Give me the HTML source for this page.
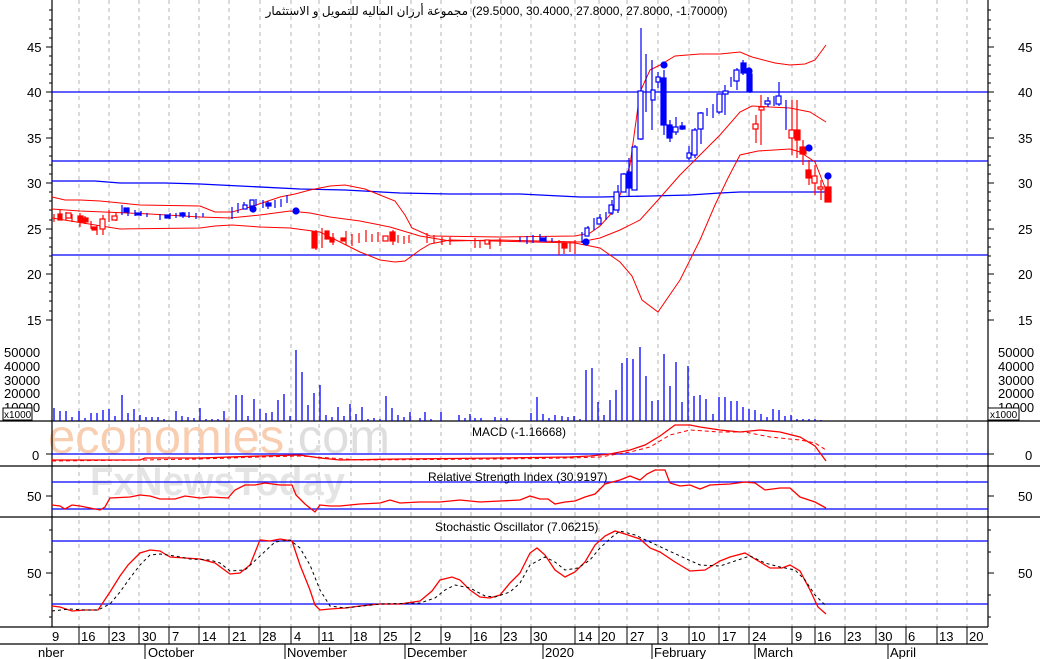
<!DOCTYPE html>
<html><head><meta charset="utf-8"><style>
html,body{margin:0;padding:0;background:#fff;}
svg{display:block;font-family:"Liberation Sans",sans-serif;}
</style></head><body>
<svg width="1040" height="659" viewBox="0 0 1040 659" xmlns="http://www.w3.org/2000/svg">
<rect width="1040" height="659" fill="#fff"/>
<!-- vertical grid -->
<g stroke="#b4b4b4" stroke-dasharray="4,4" stroke-width="1">
<path d="M79 0V627M109 0V627M139 0V627M169 0V627M199 0V627M229 0V627M260 0V627M291 0V627M319 0V627M351 0V627M380 0V627M411 0V627M441 0V627M471 0V627M501 0V627M531 0V627M575 0V627M599 0V627M627 0V627M658 0V627M689 0V627M719 0V627M749 0V627M792 0V627M815 0V627M845 0V627M876 0V627M906 0V627M937 0V627M967 0V627"/>
</g>
<!-- watermark -->
<text x="48" y="453" font-size="48" fill="#f8cdb0" textLength="342" lengthAdjust="spacingAndGlyphs">economies<tspan fill="#dedede">.com</tspan></text>
<text x="90" y="495" font-size="40" fill="#e4e4e4" font-weight="bold" textLength="255" lengthAdjust="spacingAndGlyphs">FxNewsToday</text>
<!-- axes -->
<g stroke="#000" stroke-width="1.2" fill="none">
<path d="M52 0V627M988 0V627"/>
<path d="M52 421H1040M0 421H52M0 466H1040M0 517H1040M0 627H988"/>
<path d="M0 644H988"/>
</g>
<!-- ticks -->
<g stroke="#000" stroke-width="1">
<path d="M46 47h6M46 92h6M46 138h6M46 183h6M46 229h6M46 274h6M46 320h6M988 47h6M988 92h6M988 138h6M988 183h6M988 229h6M988 274h6M988 320h6"/>
<path d="M49 10h3M49 20h3M49 29h3M49 38h3M49 56h3M49 65h3M49 74h3M49 83h3M49 101h3M49 110h3M49 120h3M49 129h3M49 147h3M49 156h3M49 165h3M49 174h3M49 192h3M49 201h3M49 210h3M49 220h3M49 238h3M49 247h3M49 256h3M49 265h3M49 283h3M49 292h3M49 301h3M49 311h3"/>
<path d="M988 10h3M988 20h3M988 29h3M988 38h3M988 56h3M988 65h3M988 74h3M988 83h3M988 101h3M988 110h3M988 120h3M988 129h3M988 147h3M988 156h3M988 165h3M988 174h3M988 192h3M988 201h3M988 210h3M988 220h3M988 238h3M988 247h3M988 256h3M988 265h3M988 283h3M988 292h3M988 301h3M988 311h3"/>
<path d="M46 454h6M988 454h6M46 496h6M988 496h6M46 573h6M988 573h6M49 530h3M49 552h3M49 595h3M49 617h3M988 530h3M988 552h3M988 595h3M988 617h3"/>
<path d="M79 627v17M109 627v17M139 627v17M169 627v17M199 627v17M229 627v17M260 627v17M291 627v17M319 627v17M351 627v17M380 627v17M411 627v17M441 627v17M471 627v17M501 627v17M531 627v17M575 627v17M599 627v17M627 627v17M658 627v17M689 627v17M719 627v17M749 627v17M792 627v17M815 627v17M845 627v17M876 627v17M906 627v17M937 627v17M967 627v17"/>
<path d="M145 644v15M285 644v15M405 644v15M543 644v15M652 644v15M755 644v15M888 644v15"/>
</g>
<!-- axis labels -->
<g font-size="13" fill="#000">
<text x="27" y="52">45</text><text x="27" y="97">40</text><text x="27" y="143">35</text><text x="27" y="188">30</text><text x="27" y="234">25</text><text x="27" y="279">20</text><text x="27" y="325">15</text>
<text x="1018" y="52">45</text><text x="1018" y="97">40</text><text x="1018" y="143">35</text><text x="1018" y="188">30</text><text x="1018" y="234">25</text><text x="1018" y="279">20</text><text x="1018" y="325">15</text>
<text x="4" y="357">50000</text><text x="4" y="371">40000</text><text x="4" y="385">30000</text><text x="4" y="398">20000</text><text x="4" y="412">10000</text>
<text x="998" y="357">50000</text><text x="998" y="371">40000</text><text x="998" y="385">30000</text><text x="998" y="398">20000</text><text x="998" y="412">10000</text>
<text x="32" y="460">0</text><text x="1025" y="460">0</text>
<text x="27" y="501">50</text><text x="1018" y="501">50</text>
<text x="27" y="578">50</text><text x="1018" y="578">50</text>
</g>
<g font-size="10"><rect x="3" y="408" width="29" height="12" fill="#fff" stroke="#000"/><text x="4" y="418">x1000</text>
<rect x="988" y="408" width="31" height="12" fill="#fff" stroke="#000"/><text x="990" y="418">x1000</text></g>
<g font-size="13" fill="#000">
<text x="52" y="641">9</text><text x="81" y="641">16</text><text x="111" y="641">23</text><text x="142" y="641">30</text><text x="172" y="641">7</text><text x="202" y="641">14</text><text x="232" y="641">21</text><text x="262" y="641">28</text><text x="294" y="641">4</text><text x="321" y="641">11</text><text x="353" y="641">18</text><text x="383" y="641">25</text><text x="414" y="641">2</text><text x="444" y="641">9</text><text x="473" y="641">16</text><text x="503" y="641">23</text><text x="533" y="641">30</text><text x="578" y="641">14</text><text x="601" y="641">20</text><text x="630" y="641">27</text><text x="661" y="641">3</text><text x="691" y="641">10</text><text x="722" y="641">17</text><text x="752" y="641">24</text><text x="795" y="641">9</text><text x="817" y="641">16</text><text x="847" y="641">23</text><text x="878" y="641">30</text><text x="908" y="641">6</text><text x="939" y="641">13</text><text x="969" y="641">20</text>
<text x="38" y="657">nber</text><text x="148" y="657">October</text><text x="287" y="657">November</text><text x="407" y="657">December</text><text x="545" y="657">2020</text><text x="654" y="657">February</text><text x="757" y="657">March</text><text x="890" y="657">April</text>
</g>
<text x="468" y="15" font-size="12" text-anchor="end" font-family="'Liberation Sans','DejaVu Sans',sans-serif">مجموعة أرزان الماليه للتمويل و الاستثمار</text>
<text x="472" y="15" font-size="12">(29.5000, 30.4000, 27.8000, 27.8000, -1.70000)</text>
<text x="472" y="436" font-size="12">MACD (-1.16668)</text>
<text x="428" y="481" font-size="12">Relative Strength Index (30.9197)</text>
<text x="435" y="531" font-size="12">Stochastic Oscillator (7.06215)</text>
<!-- horizontal lines -->
<g stroke="#0000ff" stroke-width="1.3" fill="none">
<path d="M52 92H988M52 161H988M52 255H988"/>
<path d="M52 454H988M52 482H988M52 509H988M52 541H988M52 604H988"/>
<polyline points="52,181 95,181 120,183 165,183 200,184 300,189 345,190 400,193 450,194 520,194 560,196 580,197 600,197 650,196 690,195 720,193 740,192 826,192"/>
</g>
<!-- bollinger -->
<g stroke="#ff0000" stroke-width="1" fill="none">
<polyline points="52,197 65,200 80,200 100,201 140,205 200,206 215,212 232,212 250,207 280,197 295,194 310,190 330,186 345,185 365,189 380,195 395,201 405,215 412,228 430,236 500,237 575,236 590,233 600,226 610,215 620,195 630,165 640,92 650,70 660,65 675,56 700,54 720,54 740,52 752,57 775,63 790,65 805,64 815,60 826,45"/>
<polyline points="52,209 80,211 150,214 200,217 230,218 260,215 290,211 310,213 330,217 360,221 390,227 420,236 450,241 500,240 580,242 600,238 620,230 640,220 658,200 680,175 700,155 720,135 740,112 752,106 770,107 790,108 810,112 826,122"/>
<polyline points="52,218 120,229 200,228 215,226 232,225 260,227 290,228 320,232 340,242 360,252 380,260 395,262 405,261 420,250 430,244 450,240 575,243 600,248 620,262 632,276 642,300 658,312 680,280 700,240 715,205 728,178 740,155 758,151 790,149 800,152 815,162 826,190"/>
</g>
<!-- candles -->
<g stroke-width="1.2">
<g fill="#ff0000" stroke="#ff0000">
<path d="M54 214v8M60 210v10M66 212v8M72 214v8M80 213v14M85 216v8M91 221v8M97 225v10M103 215v20M109 210v12M116 213v8M316 230v20M322 228v20M333 233v12M346 231v14M352 234v12M359 233v10M366 230v12M372 234v8M378 232v10M393 230v15M398 235v8M404 236v8M409 235v8M427 233v10M434 235v8M442 237v8M450 237v8M480 240v8M475 238v10M490 241v8M500 238v8M559 240v15M564 242v12M570 242v10M575 240v14M761 95v50M756 115v28M792 100v55M797 100v58M803 140v25M809 160v25M815 165v30M821 180v20M828 175v26"/>
<rect x="58" y="214" width="4" height="6"/><rect x="78" y="216" width="5" height="6"/><rect x="84" y="218" width="4" height="4"/><rect x="92" y="227" width="4" height="3"/><rect x="312" y="232" width="5" height="16"/><rect x="325" y="231" width="4" height="8"/><rect x="330" y="238" width="4" height="4"/><rect x="341" y="238" width="4" height="3"/><rect x="390" y="232" width="5" height="9"/><rect x="562" y="243" width="5" height="5"/><rect x="795" y="130" width="5" height="10"/><rect x="800" y="147" width="6" height="7"/><rect x="806" y="170" width="5" height="8"/><rect x="825" y="187" width="6" height="15"/>
<g fill="#fff"><rect x="66" y="213" width="5" height="5"/><rect x="100" y="219" width="5" height="10"/><rect x="112" y="216" width="5" height="4"/><rect x="383" y="236" width="5" height="5"/><rect x="753" y="124" width="5" height="5"/><rect x="759" y="107" width="5" height="3"/><rect x="789" y="130" width="5" height="8"/><rect x="812" y="176" width="5" height="7"/><rect x="818" y="187" width="5" height="2"/><rect x="485" y="240" width="4" height="4"/></g>
</g>
<g fill="#0000ff" stroke="#0000ff">
<path d="M122 205v10M128 208v8M135 210v6M141 211v5M147 213v4M160 214v6M170 213v6M176 213v5M183 212v6M189 212v6M196 213v6M203 213v4M232 207v12M238 203v10M244 202v7M250 200v9M256 199v7M263 200v8M268 201v8M275 200v8M281 199v8M287 195v8M520 237v5M527 236v8M533 235v8M540 234v6M546 236v6M552 238v4M582 232v11M588 226v10M594 218v12M600 214v10M606 212v8M612 200v15M618 185v28M624 173v18M629 158v38M635 145v45M641 28v112M646 54v58M652 60v70M658 72v16M664 70v65M670 120v22M676 117v18M682 122v8M689 146v14M695 128v30M701 112v32M707 108v8M713 104v14M719 94v20M725 85v30M731 77v10M737 68v22M743 60v15M750 68v25M768 97v10M774 96v10M779 82v24M786 100v30"/>
<rect x="124" y="208" width="5" height="4"/><rect x="136" y="213" width="5" height="2"/><rect x="165" y="215" width="5" height="3"/><rect x="180" y="213" width="5" height="3"/><rect x="266" y="203" width="5" height="3"/><rect x="540" y="238" width="5" height="3"/><rect x="627" y="172" width="4" height="16"/><rect x="661" y="78" width="5" height="47"/><rect x="667" y="125" width="5" height="13"/><rect x="680" y="126" width="5" height="3"/><rect x="741" y="63" width="5" height="10"/><rect x="747" y="74" width="5" height="17"/>
<g fill="#fff"><rect x="243" y="205" width="4" height="4"/><rect x="250" y="200" width="4" height="6"/><rect x="585" y="228" width="4" height="8"/><rect x="597" y="218" width="4" height="6"/><rect x="609" y="205" width="4" height="8"/><rect x="614" y="192" width="5" height="18"/><rect x="621" y="174" width="5" height="18"/><rect x="632" y="147" width="5" height="43"/><rect x="638" y="91" width="5" height="48"/><rect x="651" y="90" width="4" height="10"/><rect x="656" y="77" width="4" height="5"/><rect x="673" y="127" width="5" height="5"/><rect x="687" y="153" width="4" height="5"/><rect x="692" y="130" width="5" height="25"/><rect x="698" y="113" width="5" height="16"/><rect x="717" y="94" width="5" height="18"/><rect x="723" y="91" width="5" height="3"/><rect x="734" y="70" width="5" height="11"/><rect x="765" y="101" width="5" height="3"/><rect x="776" y="96" width="5" height="8"/></g>
<circle cx="253" cy="209" r="3"/><circle cx="296" cy="211" r="3"/><circle cx="586" cy="242" r="3"/><circle cx="664" cy="65" r="3"/><circle cx="749" cy="71" r="3"/><circle cx="809" cy="148" r="3"/><circle cx="828" cy="176" r="3"/>
</g>
</g>
<!-- volume -->
<g stroke="#0000ff" stroke-width="1.3">
<path d="M54 421v-13M60 421v-10M66 421v-10M72 421v-4M79 421v-10M85 421v-3M91 421v-8M97 421v-8M103 421v-11M109 421v-12M115 421v-5M122 421v-26M128 421v-8M134 421v-12M140 421v-6M146 421v-4M152 421v-4M158 421v-4M164 421v-2M176 421v-10M182 421v-5M188 421v-4M194 421v-3M200 421v-13M206 421v-2M212 421v-2M218 421v-2M224 421v-10M236 421v-26M242 421v-26M248 421v-5M254 421v-22M260 421v-12M266 421v-8M272 421v-9M278 421v-21M284 421v-27M290 421v-5M296 421v-71M302 421v-49M308 421v-16M314 421v-28M320 421v-36M326 421v-6M332 421v-4M338 421v-14M344 421v-5M350 421v-17M356 421v-7M362 421v-14M368 421v-2M374 421v-3M380 421v-2M386 421v-25M392 421v-13M398 421v-6M404 421v-4M410 421v-9M420 421v-3M425 421v-9M431 421v-2M441 421v-9M459 421v-6M465 421v-3M470 421v-7M475 421v-3M481 421v-3M495 421v-4M501 421v-3M507 421v-3M531 421v-8M537 421v-24M543 421v-7M549 421v-3M555 421v-6M562 421v-5M568 421v-4M574 421v-5M580 421v-2M586 421v-51M592 421v-53M598 421v-19M604 421v-6M610 421v-21M616 421v-31M622 421v-58M627 421v-63M633 421v-62M640 421v-74M646 421v-45M652 421v-20M658 421v-21M664 421v-67M670 421v-35M676 421v-59M682 421v-19M688 421v-55M694 421v-25M700 421v-26M706 421v-22M713 421v-7M719 421v-24M725 421v-24M731 421v-20M737 421v-20M743 421v-14M749 421v-12M755 421v-11M761 421v-7M767 421v-4M773 421v-12M779 421v-11M785 421v-5M791 421v-6M797 421v-2M803 421v-2M809 421v-2M815 421v-2M821 421v-1"/>
</g>
<!-- MACD -->
<polyline fill="none" stroke="#ff0000" stroke-width="1.3" points="52,460 140,460 145,458 200,458 260,456 300,455 320,458 340,460 400,459 500,458 570,457 590,456 610,454 630,450 645,445 660,436 675,425 690,425 700,427 720,430 740,432 760,430 780,432 800,437 815,446 826,461"/>
<polyline fill="none" stroke="#ff0000" stroke-width="1" stroke-dasharray="4,3" points="52,461 140,460 200,459 260,457 300,456 330,458 360,460 500,459 570,458 600,457 630,452 650,447 670,435 690,430 720,432 745,432 770,437 800,440 815,443 826,450"/>
<!-- RSI -->
<polyline fill="none" stroke="#ff0000" stroke-width="1.3" points="52,505 60,506 65,509 72,505 80,506 90,508 100,510 105,507 110,498 130,497 140,495 150,496 160,499 175,499 185,496 200,498 210,497 228,498 235,490 245,485 255,485 265,483 280,485 292,485 296,495 305,504 310,508 315,512 320,505 330,506 340,506 360,504 380,503 390,500 400,503 420,502 440,502 460,500 480,502 500,501 520,500 530,496 540,499 548,499 555,504 565,502 575,501 585,497 595,494 605,484 620,480 630,476 640,480 647,474 655,470 665,470 670,483 680,486 690,485 700,489 710,485 730,484 745,482 755,483 765,490 780,488 790,488 800,497 815,502 826,508"/>
<!-- Stochastic -->
<polyline fill="none" stroke="#ff0000" stroke-width="1.3" points="52,606 60,607 72,611 85,610 98,610 110,592 120,576 128,565 140,553 150,550 160,551 170,557 185,558 200,559 215,563 230,574 240,573 250,565 260,540 270,541 280,539 292,541 300,565 310,590 315,605 320,610 330,609 345,608 360,606 380,604 400,604 420,601 432,591 440,580 452,577 460,580 470,590 480,597 490,598 500,595 510,583 520,573 530,553 537,548 545,555 555,570 565,577 575,572 585,562 595,545 605,536 615,531 625,534 640,539 650,548 660,552 675,562 690,571 705,570 720,561 730,557 745,553 755,559 770,568 782,568 790,565 800,571 810,590 818,607 826,614"/>
<polyline fill="none" stroke="#000" stroke-width="1" stroke-dasharray="3,3" points="52,611 70,609 85,610 98,610 110,604 120,592 130,578 140,565 150,555 160,554 175,556 190,559 210,560 220,563 230,571 245,570 260,556 275,542 290,540 300,548 310,565 320,590 330,606 345,608 380,604 420,603 435,598 445,590 455,585 470,588 485,596 495,597 510,592 520,583 530,565 545,557 555,562 565,570 578,568 590,560 600,548 612,537 620,531 635,535 650,542 665,549 680,556 700,565 720,566 735,561 750,556 765,563 780,567 795,570 805,580 815,595 826,606"/>
</svg>
</body></html>
